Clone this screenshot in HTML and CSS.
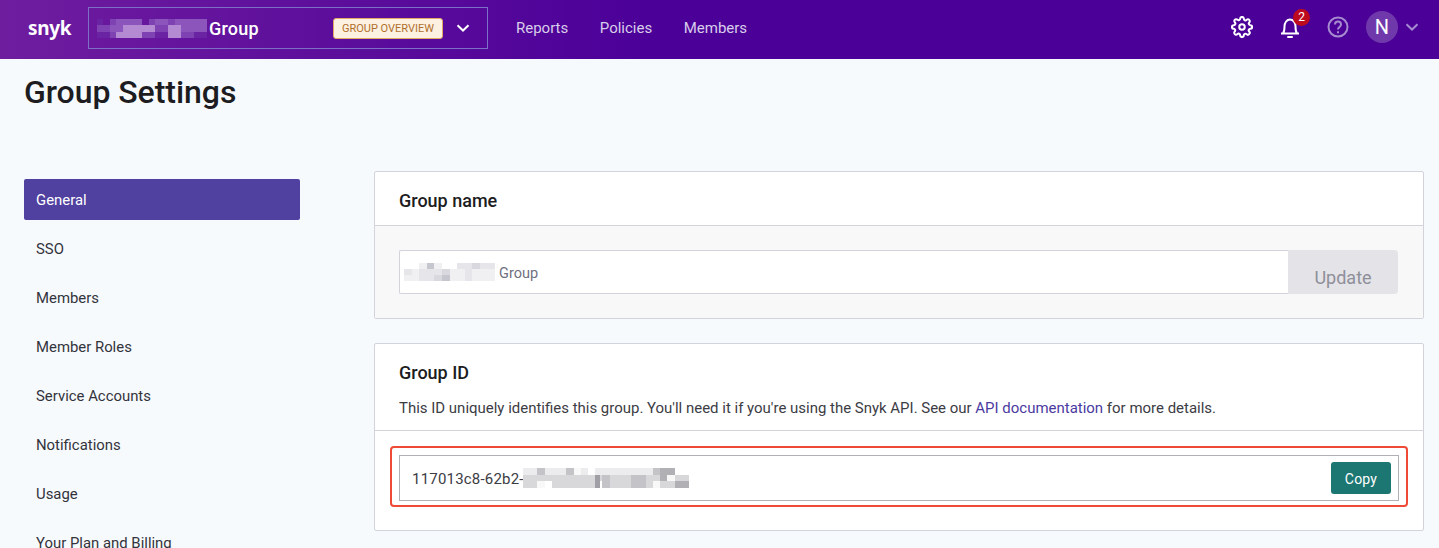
FILE: index.html
```html
<!DOCTYPE html>
<html lang="en">
<head>
    <meta charset="UTF-8">
    <title>Group Settings</title>
    <link rel="stylesheet" href="styles.css">
</head>
<body>
    <!-- top bar -->
    <header class="topbar">
        <span class="logo">snyk</span>
        <div class="switcher">
            <svg class="mosaic" width="110" height="19" viewBox="0 0 17 3" preserveAspectRatio="none" shape-rendering="crispEdges">
                <path fill="#7f42b3" d="M2 0h3v1h-3zM8 0h2v1h-2zM11 0h1v1h-1zM0 1h17v2h-17z"/>
                <path fill="#8c55bb" d="M3 0h4v1h-4zM9 0h2v1h-2zM12 0h5v1h-5zM2 1h2v1h-2zM13 1h4v1h-4z"/>
                <path fill="#b48ad2" d="M4 1h5v1h-5zM3 2h4v1h-4zM11 1h2v2h-2z"/>
                <path fill="#6a23a3" d="M0 0h1v1h-1zM0 2h2v1h-2zM9 2h2v1h-2zM15 2h2v1h-2z"/>
            </svg>
            <span class="switcher-name">Group</span>
            <span class="pill">GROUP OVERVIEW</span>
            <svg class="chevron" width="14" height="8" viewBox="0 0 14 8"><path d="M1.500 1.200 7 6.500l5.500-5.300" fill="none" stroke="#fff" stroke-width="2"/></svg>
        </div>
        <nav class="topnav">
            <a>Reports</a>
            <a>Policies</a>
            <a>Members</a>
        </nav>
        <div class="tools">
            <svg class="tool" width="22" height="22" viewBox="0 0 24 24" fill="none" stroke="#fff" stroke-width="2.200" stroke-linejoin="round">
                <circle cx="12" cy="12" r="3"/>
                <path d="M19.400 15a1.700 1.700 0 0 0 .3 1.800l.1.100a2 2 0 1 1-2.900 2.900l-.1-.1a1.700 1.700 0 0 0-2.800 1.200V21a2 2 0 1 1-4 0v-.1a1.700 1.700 0 0 0-2.900-1.200l-.1.100a2 2 0 1 1-2.900-2.900l.1-.1a1.700 1.700 0 0 0-1.200-2.800H3a2 2 0 1 1 0-4h.1a1.700 1.700 0 0 0 1.200-2.900l-.1-.1a2 2 0 1 1 2.900-2.900l.1.100a1.700 1.700 0 0 0 2.800-1.200V3a2 2 0 1 1 4 0v.1a1.700 1.700 0 0 0 2.900 1.200l.1-.1a2 2 0 1 1 2.900 2.900l-.1.1a1.700 1.700 0 0 0 1.200 2.800h.1a2 2 0 1 1 0 4h-.1a1.700 1.700 0 0 0-1.500 1z"/>
            </svg>
            <div class="bell">
                <svg width="22" height="24" viewBox="0 0 22 24" fill="none" stroke="#fff" stroke-width="2">
                    <path d="M2 18.500h18M4 18.500c1.500-2 1.500-4 1.500-7 0-4 2.500-7 5.500-7s5.500 3 5.500 7c0 3 0 5 1.500 7"/>
                    <path d="M9 22h4" stroke-linecap="round"/>
                </svg>
                <span class="badge">2</span>
            </div>
            <svg class="tool" width="22" height="22" viewBox="0 0 22 22" fill="none" stroke="#a78bd0" stroke-width="2">
                <circle cx="11" cy="11" r="9.500"/>
                <path d="M8 8.500c0-4 6-4 6 0 0 2.500-3 2.500-3 5"/>
                <path d="M11 15.200v2"/>
            </svg>
            <span class="avatar">N</span>
            <svg class="chevron" width="14" height="8" viewBox="0 0 14 8"><path d="M1.500 1.200 7 6.500l5.500-5.300" fill="none" stroke="#a78bd0" stroke-width="2"/></svg>
        </div>
    </header>

    <h1 class="title">Group Settings</h1>

    <div class="layout">
        <!-- side menu -->
        <ul class="sidemenu">
            <li class="active">General</li>
            <li>SSO</li>
            <li>Members</li>
            <li>Member Roles</li>
            <li>Service Accounts</li>
            <li>Notifications</li>
            <li>Usage</li>
            <li>Your Plan and Billing</li>
        </ul>

        <main class="content">
            <section class="panel">
                <div class="panel-head">
                    <h2>Group name</h2>
                </div>
                <div class="panel-body grey">
                    <div class="name-form">
                        <div class="name-input">
                            <svg class="mosaic" width="91" height="18" viewBox="0 0 12 3" preserveAspectRatio="none" shape-rendering="crispEdges">
                                <path fill="#f0f0f3" d="M2 0h1v1h-1zM4 0h1v1h-1zM1 1h1v1h-1zM0 2h2v1h-2zM6 1h6v2h-6z"/>
                                <path fill="#e6e6ea" d="M0 1h1v1h-1zM2 1h4v2h-4zM7 0h5v1h-5zM8 1h1v2h-1z"/>
                                <path fill="#c6c6cf" d="M3 0h1v1h-1zM5 2h1v1h-1z"/>
                                <path fill="#d8d8de" d="M4 2h1v1h-1zM9 0h1v1h-1zM5 1h1v1h-1z"/>
                            </svg>
                            <span>Group</span>
                        </div>
                        <button class="update-btn">Update</button>
                    </div>
                </div>
            </section>

            <section class="panel">
                <div class="panel-head tall">
                    <h2>Group ID</h2>
                    <p>This ID uniquely identifies this group. You'll need it if you're using the Snyk API. See our <a>API documentation</a> for more details.</p>
                </div>
                <div class="panel-body">
                    <div class="redbox">
                        <div class="id-field">
                            <span class="id-text">117013c8-62b2-4</span>
                            <svg class="mosaic id-mosaic" width="166" height="20" viewBox="0 0 23 3" preserveAspectRatio="none" shape-rendering="crispEdges">
                                <path fill="#ececee" d="M0 0h2v1h-2zM3 0h3v1h-3zM7 0h2v1h-2zM10 0h8v1h-8z"/>
                                <path fill="#d8d8db" d="M0 1h23v1h-23zM0 2h2v1h-2zM4 2h6v1h-6zM12 2h9v1h-9z"/>
                                <path fill="#c4c4c8" d="M2 0h1v1h-1zM6 0h1v1h-1zM11 1h1v2h-1zM15 1h2v2h-2zM18 0h1v1h-1z"/>
                                <path fill="#b0b0b5" d="M19 0h2v2h-2zM21 2h2v1h-2z"/>
                                <path fill="#9f9fa5" d="M10 1h0.700v2h-0.700z"/>
                                <path fill="#f8f8f9" d="M2 2h1v1h-1zM7 0h1v1h-1zM20 1h1v1h-1zM18 2h1v1h-1z"/>
                            </svg>
                            <button class="copy-btn">Copy</button>
                        </div>
                    </div>
                </div>
            </section>
        </main>
    </div>
</body>
</html>
```

FILE: styles.css
```css
*{margin:0;padding:0;box-sizing:border-box;}
html,body{height:548px;overflow:hidden;}
body{background:#f6fafd;color:#1c1c21;font-family:Roboto,"Liberation Sans",sans-serif;font-size:14px;}

.topbar{height:59px;display:flex;align-items:center;padding-left:28px;background:linear-gradient(90deg,#6f1d9f 0,#4b0098 45%,#4b0098 100%);}
.logo{width:60px;font-family:"Noto Sans",sans-serif;font-weight:700;font-size:19px;line-height:24px;color:#fff;letter-spacing:-.3px;margin-top:-4px;}
.switcher{width:400px;height:42px;display:flex;align-items:center;padding:0 17px 0 8px;border:1px solid #7c6fc8;margin-top:-3px;}
.mosaic{display:block;flex:none;}
.switcher-name{margin-left:2px;font-size:18px;font-weight:500;color:#fff;letter-spacing:.2px;}
.pill{margin-left:auto;height:21px;width:110px;line-height:19px;text-align:center;font-size:11px;color:#b0702c;background:#fdf1e2;border:1px solid #e3a866;border-radius:3px;}
.chevron{flex:none;}
.switcher .chevron{margin-left:13px;}

.topnav{display:flex;gap:31.500px;margin-left:28px;margin-top:-3px;}
.topnav a{font-size:15px;color:#d8cdea;}

.tools{margin-left:auto;display:flex;align-items:center;margin-top:-5px;padding-right:20px;}
.tool{display:block;flex:none;}
.bell{position:relative;width:22px;height:24px;margin-left:26px;}
.bell svg{display:block;}
.badge{position:absolute;left:14px;top:-6px;width:17px;height:17px;line-height:17px;border-radius:50%;background:#bd0a1f;color:#fff;font-size:12px;text-align:center;}
.bell + .tool{margin-left:26px;}
.avatar{width:32px;height:32px;margin-left:17px;border-radius:50%;background:#6f39ab;color:#fff;font-size:20px;line-height:32px;text-align:center;}
.tools .chevron{margin-left:7px;}

.title{margin:14px 0 0 24px;font-size:32px;line-height:38px;font-weight:500;letter-spacing:-.05px;}

.layout{display:flex;margin-top:60px;padding:0 15px 0 24px;}
.sidemenu{width:276px;flex:none;list-style:none;display:flex;flex-direction:column;gap:8px;margin-top:8px;}
.sidemenu li{height:41px;line-height:43px;padding-left:12px;font-size:14.900px;color:#33333c;}
.sidemenu li.active{background:#50409f;color:#fff;border-radius:2px;}

.content{margin-left:74px;flex:1;display:flex;flex-direction:column;gap:24px;}
.panel{background:#fff;border:1px solid #d3d3db;border-radius:2px;}
.panel-head{height:54px;padding:19px 24px 0;border-bottom:1px solid #d3d3db;}
.panel-head.tall{height:87px;}
.panel-head h2{font-size:18px;line-height:20px;font-weight:500;}
.panel-head p{margin-top:16px;font-size:14.980px;line-height:18px;color:#3c3c44;}
.panel-head a{color:#4a3a9f;}
.panel-body.grey{background:#f8f8f8;height:92px;padding:24px 25px 0 24px;}

.name-form{display:flex;height:44px;}
.name-input{flex:1;display:flex;align-items:center;gap:4px;padding:2px 0 0 4px;background:#fff;border:1px solid #d3d3db;border-right:0;border-radius:2px 0 0 2px;font-size:14.500px;color:#70707f;}
.name-input .mosaic{margin-top:-2px;}
.update-btn{width:110px;border:0;border-radius:0 4px 4px 0;background:#e3e3e8;color:#8f8f99;font-family:inherit;font-size:18px;padding-top:10px;}

.panel-body{height:99px;padding:15px 15px 0 15px;}
.redbox{height:61px;padding:7px 7px 3px;border:2px solid #ee4a36;border-radius:4px;}
.id-field{height:46px;display:flex;align-items:center;padding:0 7px 0 12px;border:1px solid #b0b0b8;background:#fff;}
.id-text{padding-top:2px;font-size:15px;color:#3c3c44;letter-spacing:.2px;}
.id-mosaic{margin-left:-9px;}
.copy-btn{margin-left:auto;width:60px;height:32px;padding-top:1px;border:0;border-radius:3px;background:#1c7773;color:#fff;font-family:inherit;font-size:14px;letter-spacing:.2px;}
```
